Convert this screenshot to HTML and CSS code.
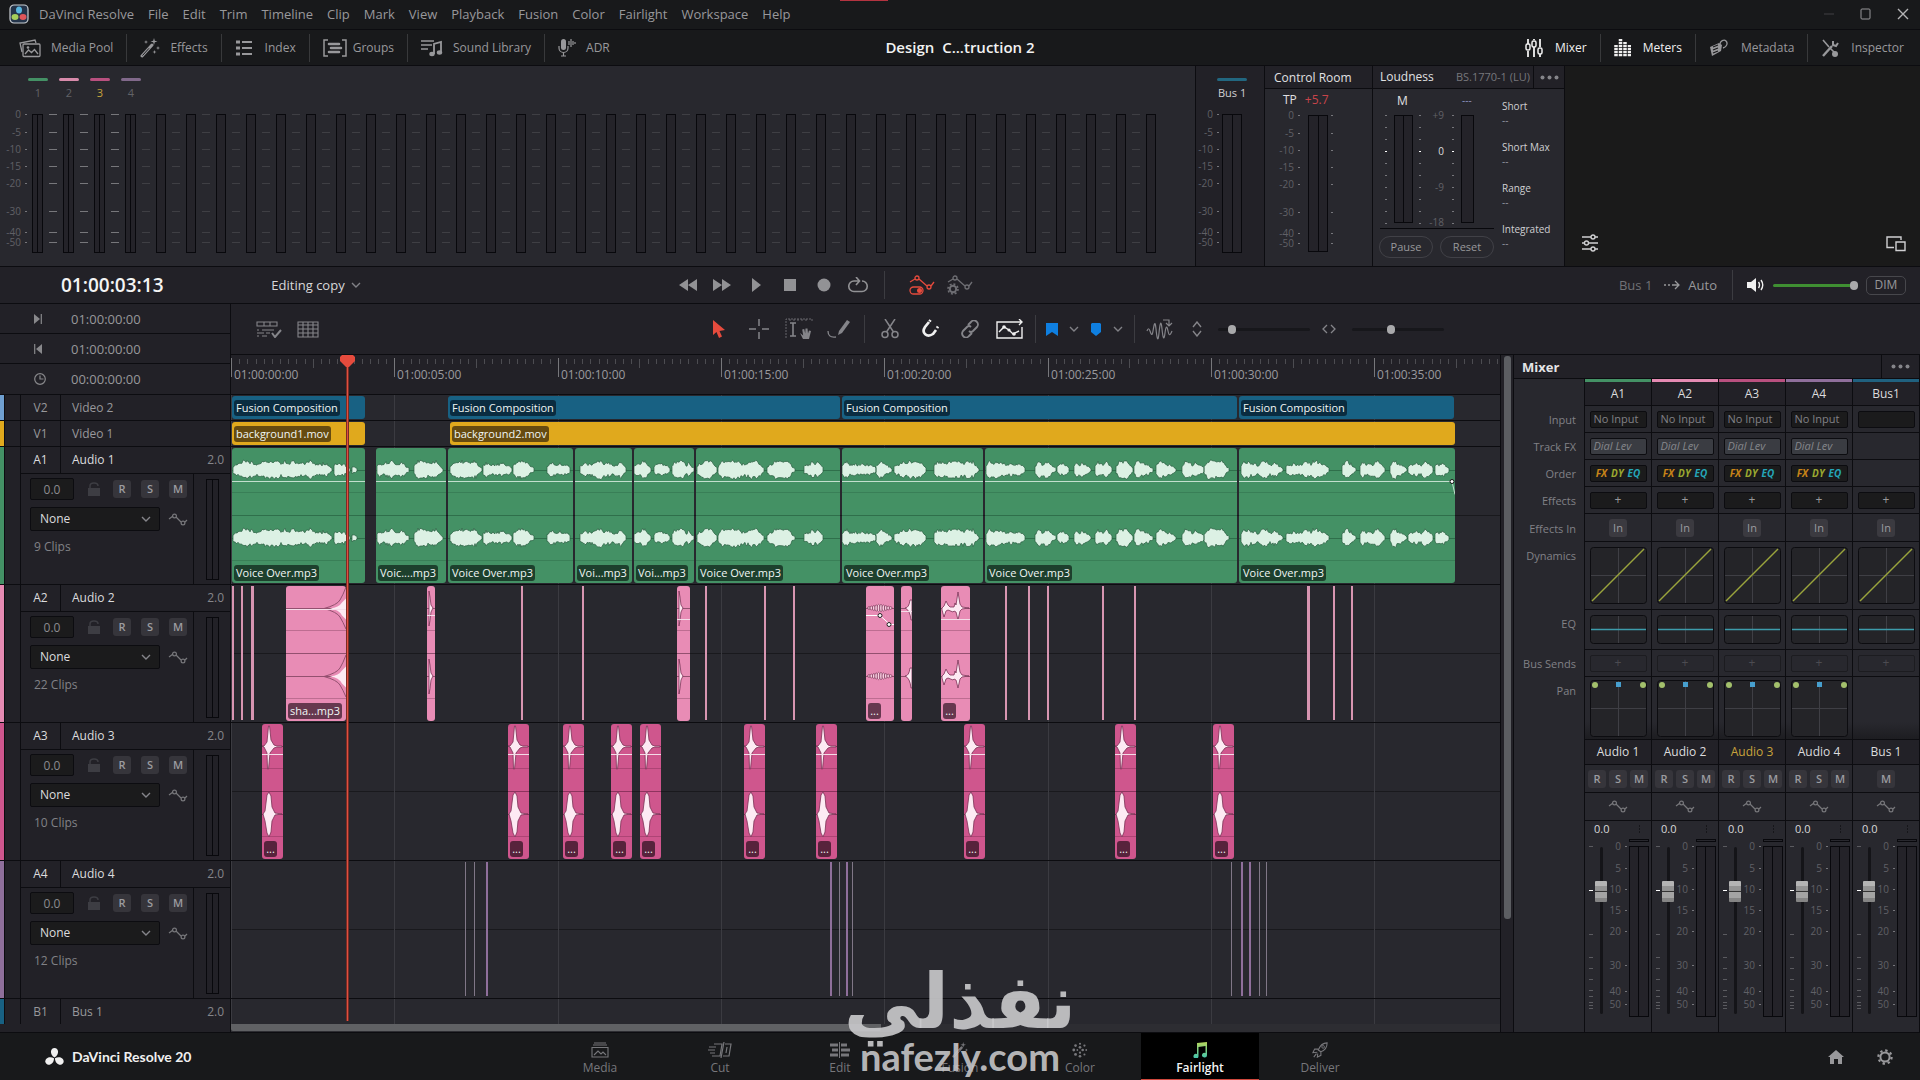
FILE: index.html
```html
<!DOCTYPE html>
<html lang="en">
<head>
<meta charset="utf-8">
<title>DaVinci Resolve - Fairlight</title>
<link rel="stylesheet" href="styles.css">
</head>
<body>
<svg class="defs" aria-hidden="true">
  <symbol id="i-pool" viewBox="0 0 22 20"><g fill="none" stroke="currentColor" stroke-width="1.3"><rect x="4" y="6" width="17" height="12.500" rx="1"/><path d="M3 14 1 5l15-3 1 3"/><path d="m6 16 3.500-4 3 2.500 3-3L19 16"/></g><circle cx="9" cy="9.500" r="1.300" fill="currentColor"/></symbol>
  <symbol id="i-fx" viewBox="0 0 20 20"><path d="M2 18 12 7" stroke="currentColor" stroke-width="3" stroke-linecap="round"/><path d="M2.500 17.500 9 10.300" stroke="#18191b" stroke-width="1"/><path d="m14 0 .8 2.700L17.500 3.500l-2.700.8L14 7l-.8-2.700-2.700-.8 2.700-.8zM18 8l.5 1.500L20 10l-1.500.5L18 12l-.5-1.500L16 10l1.500-.5zM6 2l.5 1.500L8 4l-1.500.5L6 6l-.5-1.500L4 4l1.500-.5zM14.500 12l.5 1.500 1.500.5-1.500.5-.5 1.500-.5-1.500-1.500-.5 1.500-.5z" fill="currentColor"/></symbol>
  <symbol id="i-index" viewBox="0 0 18 16"><path d="M0 2h4M0 8h4M0 14h4" stroke="currentColor" stroke-width="3.200"/><path d="M6 2h10M6 8h10M6 14h10" stroke="currentColor" stroke-width="1.800"/></symbol>
  <symbol id="i-groups" viewBox="0 0 24 18"><path d="M5 1H1v16h4M19 1h4v16h-4" fill="none" stroke="currentColor" stroke-width="1.500"/><path d="M6 5h10M8 9h10M6 13h10" stroke="currentColor" stroke-width="2.600" stroke-linecap="round"/></symbol>
  <symbol id="i-sound" viewBox="0 0 22 18"><path d="M0 2h13M0 6h11M0 10h7" stroke="currentColor" stroke-width="1.500"/><path d="M13 15V5l7-2v10" fill="none" stroke="currentColor" stroke-width="1.800"/><ellipse cx="11" cy="15" rx="2.700" ry="2.200" fill="currentColor"/><ellipse cx="18.500" cy="13.500" rx="2.700" ry="2.200" fill="currentColor"/></symbol>
  <symbol id="i-adr" viewBox="0 0 18 20"><rect x="3" y="1" width="5" height="11" rx="2.500" fill="currentColor"/><path d="M1 8v2a4.500 4.500 0 0 0 9 0V8M5.500 15v3M3 18h5M11 3v4M13 1v8M15 3v4M17 4v2" fill="none" stroke="currentColor" stroke-width="1.200"/></symbol>
  <symbol id="i-mixer" viewBox="0 0 18 18"><path d="M3 0v5M3 12v6M9 0v1M9 8v10M15 0v8M15 15v3" stroke="currentColor" stroke-width="1.800"/><g fill="none" stroke="currentColor" stroke-width="1.500"><rect x="1" y="5" width="4" height="6" rx="1.500"/><rect x="7" y="2" width="4" height="6" rx="1.500"/><rect x="13" y="9" width="4" height="6" rx="1.500"/></g></symbol>
  <symbol id="i-meters" viewBox="0 0 17 18"><path d="M2 6v12M6.500 0v18M11 3v15M15.500 6v12" stroke="currentColor" stroke-width="3.500" stroke-dasharray="2.200 .8"/></symbol>
  <symbol id="i-meta" viewBox="0 0 20 18"><path d="m1 8 9-4 3 2-1 6-9 5z" fill="currentColor"/><path d="m4 8 5-2M4 11l5-2M4 14l5-2" stroke="#18191b" stroke-width="1.200"/><path d="M11 5c0-3 4-5 6-3s1 6-3 7" fill="none" stroke="currentColor" stroke-width="1.300"/></symbol>
  <symbol id="i-inspect" viewBox="0 0 18 18"><path d="m2 1 6 7M9 9l6 6" stroke="currentColor" stroke-width="1.600"/><circle cx="14" cy="15" r="3" fill="currentColor"/><path d="m2 17 9-10" stroke="currentColor" stroke-width="2.400"/><path d="M12 2v4l3 1 2-3" fill="none" stroke="currentColor" stroke-width="2"/></symbol>
  <symbol id="i-sliders" viewBox="0 0 18 18"><g fill="none" stroke="currentColor" stroke-width="1.400"><path d="M1 3h9M14 3h3M1 9h2M8 9h9M1 15h9M14 15h3"/><circle cx="12" cy="3" r="2"/><circle cx="5.500" cy="9" r="2"/><circle cx="12" cy="15" r="2"/></g></symbol>
  <symbol id="i-pip" viewBox="0 0 20 16"><path d="M8 11.500H1V1h14v3M10 6h9v8.500h-9z" fill="none" stroke="currentColor" stroke-width="1.400"/></symbol>
  <symbol id="i-chev" viewBox="0 0 10 6"><path d="m1 1 4 4 4-4" fill="none" stroke="currentColor" stroke-width="1.400"/></symbol>
  <symbol id="i-rew" viewBox="0 0 20 14"><path d="M10 1v12L1 7zM19 1v12l-9-6z" fill="currentColor"/></symbol>
  <symbol id="i-ff" viewBox="0 0 20 14"><path d="M1 1v12l9-6zM10 1v12l9-6z" fill="currentColor"/></symbol>
  <symbol id="i-play" viewBox="0 0 20 14"><path d="M6 0v14l9-7z" fill="currentColor"/></symbol>
  <symbol id="i-stop" viewBox="0 0 20 14"><path d="M4 1h12v12H4z" fill="currentColor"/></symbol>
  <symbol id="i-rec" viewBox="0 0 20 14"><circle cx="10" cy="7" r="6.500" fill="currentColor"/></symbol>
  <symbol id="i-loop" viewBox="0 0 22 16"><path d="M7 4a5.200 5.200 0 0 0 0 10.500h8A5.200 5.200 0 0 0 15 4h-5M13 0l-3.500 4 3.500 4" fill="none" stroke="currentColor" stroke-width="1.600" transform="matrix(-1 0 0 1 22 0)"/></symbol>
  <symbol id="i-autosw" viewBox="0 0 26 20"><g fill="none" stroke="currentColor" stroke-width="1.300"><path d="m1 7 5-3M10 4l8 7M22 11l3-4"/><circle cx="8" cy="3" r="2"/><circle cx="20" cy="12" r="2"/><rect x="1" y="12" width="13" height="7" rx="3.500"/></g><circle cx="10.500" cy="15.500" r="2.500" fill="currentColor"/></symbol>
  <symbol id="i-autoset" viewBox="0 0 26 20"><g fill="none" stroke="currentColor" stroke-width="1.300"><path d="m1 7 5-3M10 4l8 7M22 11l3-4"/><circle cx="8" cy="3" r="2"/><circle cx="20" cy="12" r="2"/><circle cx="6" cy="14" r="3.200" stroke-width="2"/><circle cx="6" cy="14" r="5" stroke-width="1.600" stroke-dasharray="2 1.900"/></g></symbol>
  <symbol id="i-curve" viewBox="0 0 20 13"><g fill="none" stroke="currentColor" stroke-width="1.200"><path d="m1 6 4-3M8 4l5 5M17 9l2-2"/><circle cx="6.500" cy="3" r="1.900"/><circle cx="15" cy="10" r="1.900"/></g></symbol>
  <symbol id="i-spk" viewBox="0 0 18 14"><path d="M0 4h4l5-4v14L4 10H0z" fill="currentColor"/><path d="M11.500 4q2 3 0 6M14 2q3.500 5 0 10" fill="none" stroke="currentColor" stroke-width="1.400"/></symbol>
  <symbol id="i-arrow" viewBox="0 0 16 10"><path d="M0 5h2M4 5h2M8 5h7M11 1l4 4-4 4" fill="none" stroke="currentColor" stroke-width="1.300"/></symbol>
  <symbol id="i-in" viewBox="0 0 8 10"><path d="M0 0v10l6-5z" fill="currentColor"/><path d="M7.300 0v10" stroke="currentColor" stroke-width="1.200"/></symbol>
  <symbol id="i-clock" viewBox="0 0 12 12"><g fill="none" stroke="currentColor" stroke-width="1.200"><circle cx="6" cy="6" r="5.300"/><path d="M6 2.500V6h3.500"/></g></symbol>
  <symbol id="i-opts" viewBox="0 0 26 17"><path d="M1 1h20v4H1zM8 1v4M14 1v4M1 9h2M6 9h12M1 12h7M10 12h4M1 15h2M6 15h5" fill="none" stroke="currentColor" stroke-width="1.100"/><path d="m16 12 3 4 6-7" fill="none" stroke="currentColor" stroke-width="2"/></symbol>
  <symbol id="i-grid" viewBox="0 0 22 17"><path d="M1 1h20v15H1zM1 4h20M1 8h20M1 12h20M6 1v15M11 1v15M16 1v15" fill="none" stroke="currentColor" stroke-width="1.100"/></symbol>
  <symbol id="i-cursor" viewBox="0 0 12 18"><path d="M0 0v15l3.500-3 2.500 6 3-1.500-2.500-5.500L12 10z" fill="currentColor"/></symbol>
  <symbol id="i-cross" viewBox="0 0 20 20"><path d="M10 0v7M10 13v7M0 10h7M13 10h7" stroke="currentColor" stroke-width="1.500"/></symbol>
  <symbol id="i-ibeam" viewBox="0 0 28 22"><path d="M1 20V1h26v3M5 1v3M9 1v3M13 1v3M17 1v3M21 1v3" fill="none" stroke="currentColor" stroke-width=".7" stroke-dasharray="2 1"/><path d="M5 5h6M8 5v13M5 18h6" stroke="currentColor" stroke-width="1.600"/><path d="m15 15 3 6h6l2-8-2-.5-1 3-.5-5h-2l-.3 5-1-4.500-2 .5 1 6z" fill="currentColor"/></symbol>
  <symbol id="i-pencil" viewBox="0 0 24 20"><path d="m12 12 8-11 3 2-8 11-4 2z" fill="currentColor"/><path d="M1 12c0 4 2 7 8 6" fill="none" stroke="currentColor" stroke-width="1.300"/></symbol>
  <symbol id="i-cut" viewBox="0 0 18 20"><g fill="none" stroke="currentColor" stroke-width="1.500"><path d="m4 0 8.500 13M14 0 5.500 13"/><circle cx="4" cy="15.500" r="3"/><circle cx="14" cy="15.500" r="3"/></g></symbol>
  <symbol id="i-magnet" viewBox="0 0 20 20"><path d="M9 3 5 8c-4 6 2 11 8 7l3-4" fill="none" stroke="currentColor" stroke-width="2.700"/><path d="m10.500 1-1 1.500M18 7.500 17 9" stroke="currentColor" stroke-width="2.700"/></symbol>
  <symbol id="i-link" viewBox="0 0 18 18"><g fill="none" stroke="currentColor" stroke-width="1.900"><path d="m7 5 3-3a3.700 3.700 0 0 1 6 5l-4 4a3 3 0 0 1-4 0"/><path d="m11 13-3 3a3.700 3.700 0 0 1-6-5l4-4a3 3 0 0 1 4 0"/></g></symbol>
  <symbol id="i-wavebox" viewBox="0 0 28 20"><path d="M18 3H1v16h25V8M18 3h8M23 0l3 3-3 3" fill="none" stroke="currentColor" stroke-width="1.400"/><path d="m3 13 5-5 5 3 4 4 6-3" fill="none" stroke="currentColor" stroke-width="1.400"/><circle cx="8" cy="8" r="1.800" fill="currentColor"/><circle cx="13" cy="11" r="1.600" fill="currentColor"/><circle cx="18" cy="15" r="1.800" fill="currentColor"/></symbol>
  <symbol id="i-bm" viewBox="0 0 12 13"><path d="M0 0h12v13l-6-4-6 4z" fill="currentColor"/></symbol>
  <symbol id="i-shield" viewBox="0 0 10 13"><path d="M1 0h8l1 1v8l-5 4-5-4V1z" fill="currentColor"/></symbol>
  <symbol id="i-wave" viewBox="0 0 28 22"><path d="M1 13c1-3 2-3 3 0s2 6 3 0 2-12 3-2 2 14 3 4 2-14 3-4 2 12 3 4 2-7 3-2 2 5 4 0M17 2h6v5M20 5l3 3 3-3" fill="none" stroke="currentColor" stroke-width="1.200"/></symbol>
  <symbol id="i-updown" viewBox="0 0 10 16"><path d="m1 6 4-5 4 5M1 10l4 5 4-5" fill="none" stroke="currentColor" stroke-width="1.400"/></symbol>
  <symbol id="i-lr" viewBox="0 0 14 10"><path d="M5 1 1 5l4 4M9 1l4 4-4 4" fill="none" stroke="currentColor" stroke-width="1.300"/></symbol>
  <symbol id="i-lock" viewBox="0 0 14 14"><path d="M1 6h12v8H1z" fill="currentColor"/><path d="M3 6V4q0-3 4-3t4 3" fill="none" stroke="currentColor" stroke-width="1.500"/></symbol>
  <symbol id="i-media" viewBox="0 0 18 16"><path d="M3 1h12M2 3h14M1 5.500h16V15H1zM3 13l4-4 3 3 2-2 3 3" fill="none" stroke="currentColor" stroke-width="1.100"/></symbol>
  <symbol id="i-cutpg" viewBox="0 0 24 16"><path d="M6 2h8l-2 12H4M17 2h6l-2 12h-6M1 5h7M0 8h7M2 11h5M16 0l-3 16M19 5l-1 6" fill="none" stroke="currentColor" stroke-width="1.200"/></symbol>
  <symbol id="i-edit" viewBox="0 0 22 16"><path d="M1 3h8M3 8h6M1 13h8M12 3h6M12 8h9M12 13h8" stroke="currentColor" stroke-width="2.800"/><path d="M10.500 0v16" stroke="currentColor" stroke-width="1"/></symbol>
  <symbol id="i-color" viewBox="0 0 18 18"><g fill="currentColor"><circle cx="9" cy="2" r="1.200"/><circle cx="9" cy="6" r="1.500"/><circle cx="14" cy="4" r="1.300"/><circle cx="4" cy="4" r="1.500"/><circle cx="2" cy="9" r="1.600"/><circle cx="6" cy="9" r="1"/><circle cx="12" cy="9" r="1.500"/><circle cx="16" cy="9" r="1"/><circle cx="4" cy="14" r="1.600"/><circle cx="9" cy="12" r="1.300"/><circle cx="9" cy="16" r="1.500"/><circle cx="14" cy="14" r="1.200"/></g></symbol>
  <symbol id="i-note" viewBox="0 0 14 16"><defs><linearGradient id="ng" x1="0" y1="0" x2="0" y2="1"><stop offset="0" stop-color="#b5d65c"/><stop offset="1" stop-color="#41c5ae"/></linearGradient></defs><path d="M4 0v1l10-1v13a2.500 2.300 0 1 1-1.500-2V4L5.500 5v9A2.500 2.300 0 1 1 4 12z" fill="url(#ng)"/></symbol>
  <symbol id="i-rocket" viewBox="0 0 18 18"><path d="M17 1c-5 0-8 3-10 8l3 2c5-2 7-5 7-10zM7 8H3l-2 4 5-.5M10 11v4l-4 2 .5-4M2 17l3-4" fill="none" stroke="currentColor" stroke-width="1.200"/><circle cx="12.500" cy="5.500" r="1.500" fill="none" stroke="currentColor"/></symbol>
  <symbol id="i-home" viewBox="0 0 16 14"><path d="m8 0 8 7h-2v7h-4V9H6v5H2V7H0z" fill="currentColor"/></symbol>
  <symbol id="i-gear" viewBox="0 0 16 16"><circle cx="8" cy="8" r="4.600" fill="none" stroke="currentColor" stroke-width="2"/><circle cx="8" cy="8" r="6.600" fill="none" stroke="currentColor" stroke-width="2.200" stroke-dasharray="2.400 2.780"/></symbol>
  <symbol id="i-logo" viewBox="0 0 18 18"><g fill="currentColor"><path d="M9 9C4 6 5 0 9 0s5 6 0 9z"/><path d="M9 9C4 6 5 0 9 0s5 6 0 9z" transform="rotate(120 9 9.500)"/><path d="M9 9C4 6 5 0 9 0s5 6 0 9z" transform="rotate(240 9 9.500)"/></g></symbol>
</svg>

<header class="menubar">
  <svg class="app-icon" viewBox="0 0 20 20"><rect x="1" y="1" width="18" height="18" rx="4" fill="#24344a" stroke="#c9cdd2" stroke-width="1.200"/><ellipse cx="10" cy="6" rx="3" ry="3.600" fill="#5bb7e0"/><ellipse cx="6" cy="13" rx="3.500" ry="3" fill="#a5cf5a"/><ellipse cx="14" cy="13" rx="3.500" ry="3" fill="#e0565a"/></svg>
  <nav class="menus" id="menus"></nav>
  <div class="win-controls">
    <button aria-label="Minimize" class="dim"><svg width="12" height="12"><path d="M1 6h10" stroke="currentColor"/></svg></button>
    <button aria-label="Maximize"><svg width="12" height="12"><rect x="1" y="1" width="9" height="10" rx="1" fill="none" stroke="currentColor"/></svg></button>
    <button aria-label="Close" class="bright"><svg width="12" height="12"><path d="m1 1 10 10M11 1 1 11" stroke="currentColor" stroke-width="1.400"/></svg></button>
  </div>
  <i class="notch"></i>
</header>

<div class="uibar">
  <div class="uigroup">
    <button><svg width="22" height="20"><use href="#i-pool"/></svg>Media Pool</button>
    <button><svg width="20" height="20"><use href="#i-fx"/></svg>Effects</button>
    <button><svg width="20" height="16"><use href="#i-index"/></svg>Index</button>
    <button class="tight"><svg width="24" height="18"><use href="#i-groups"/></svg>Groups</button>
    <button><svg width="22" height="18"><use href="#i-sound"/></svg>Sound Library</button>
    <button><svg width="18" height="20"><use href="#i-adr"/></svg>ADR</button>
  </div>
  <h1>Design&nbsp; C...truction 2</h1>
  <div class="uigroup right">
    <button class="on"><svg width="18" height="18"><use href="#i-mixer"/></svg>Mixer</button>
    <button class="on"><svg width="17" height="18"><use href="#i-meters"/></svg>Meters</button>
    <button><svg width="20" height="18"><use href="#i-meta"/></svg>Metadata</button>
    <button><svg width="18" height="18"><use href="#i-inspect"/></svg>Inspector</button>
  </div>
</div>

<section class="monitor">
  <div class="track-meters" id="trackMeters"></div>
  <div class="bus-meter">
    <i class="pill"></i><span>Bus 1</span>
    <div class="mrow"><svg class="scale" width="24" height="145" data-scale="db"></svg><i class="meter wide"></i></div>
  </div>
  <div class="control-room">
    <h2>Control Room</h2>
    <p><b>TP</b><em>+5.7</em></p>
    <div class="mrow"><svg class="scale" width="36" height="145" data-scale="db"></svg><i class="meter wide"></i><svg class="scale" width="10" height="145" data-scale="ticks"></svg></div>
  </div>
  <div class="loudness">
    <div class="lhead"><h2>Loudness</h2><span>BS.1770-1 (LU)</span><button aria-label="Loudness options"><svg width="19" height="5"><use href="#i-dots"/></svg></button></div>
    <div class="lbody">
      <div class="lleft">
        <svg class="lscale" width="116" height="137" id="lufs"></svg>
        <div class="lbtns"><button>Pause</button><button>Reset</button></div>
      </div>
      <dl><dt>Short</dt><dd>--</dd><dt>Short Max</dt><dd>--</dd><dt>Range</dt><dd>--</dd><dt>Integrated</dt><dd>--</dd></dl>
    </div>
  </div>
  <div class="viewer">
    <button aria-label="Viewer settings"><svg width="18" height="18"><use href="#i-sliders"/></svg></button>
    <button aria-label="Float viewer"><svg width="20" height="16"><use href="#i-pip"/></svg></button>
  </div>
</section>

<section class="transport">
  <time>01:00:03:13</time>
  <button class="timeline-name">Editing copy <svg width="10" height="6"><use href="#i-chev"/></svg></button>
  <div class="keys">
    <button aria-label="Rewind"><svg width="20" height="14"><use href="#i-rew"/></svg></button>
    <button aria-label="Fast forward"><svg width="20" height="14"><use href="#i-ff"/></svg></button>
    <button aria-label="Play"><svg width="20" height="14"><use href="#i-play"/></svg></button>
    <button aria-label="Stop"><svg width="20" height="14"><use href="#i-stop"/></svg></button>
    <button aria-label="Record"><svg width="20" height="14"><use href="#i-rec"/></svg></button>
    <button aria-label="Loop"><svg width="22" height="16"><use href="#i-loop"/></svg></button>
    <i class="sep"></i>
    <button aria-label="Automation" class="red"><svg width="26" height="20"><use href="#i-autosw"/></svg></button>
    <button aria-label="Automation settings"><svg width="26" height="20"><use href="#i-autoset"/></svg></button>
  </div>
  <div class="monitoring">
    <span class="dim">Bus 1</span><svg width="16" height="10"><use href="#i-arrow"/></svg><span>Auto</span>
    <i class="sep"></i>
    <button aria-label="Mute" class="white"><svg width="18" height="14"><use href="#i-spk"/></svg></button>
    <input type="range" class="volume" aria-label="Monitor volume" value="100">
    <button class="dimbtn">DIM</button>
  </div>
</section>

<main class="work">
  <div class="times">
    <div><svg width="8" height="10"><use href="#i-in"/></svg><span>01:00:00:00</span></div>
    <div><svg width="8" height="10" class="flip"><use href="#i-in"/></svg><span>01:00:00:00</span></div>
    <div><svg width="12" height="12"><use href="#i-clock"/></svg><span>00:00:00:00</span></div>
  </div>
  <div class="tools">
    <div class="tleft">
      <button aria-label="Timeline options"><svg width="26" height="17"><use href="#i-opts"/></svg></button>
      <button aria-label="Grid"><svg width="22" height="17"><use href="#i-grid"/></svg></button>
    </div>
    <div class="tmid">
      <button aria-label="Pointer" class="red"><svg width="12" height="18"><use href="#i-cursor"/></svg></button>
      <button aria-label="Range"><svg width="20" height="20"><use href="#i-cross"/></svg></button>
      <button aria-label="Edit selection"><svg width="28" height="22"><use href="#i-ibeam"/></svg></button>
      <button aria-label="Pencil"><svg width="24" height="20"><use href="#i-pencil"/></svg></button>
      <i class="sep"></i>
      <button aria-label="Razor"><svg width="18" height="20"><use href="#i-cut"/></svg></button>
      <button aria-label="Snapping" class="white"><svg width="20" height="20"><use href="#i-magnet"/></svg></button>
      <button aria-label="Link"><svg width="18" height="18"><use href="#i-link"/></svg></button>
      <button aria-label="Automation follows edit" class="white"><svg width="28" height="20"><use href="#i-wavebox"/></svg></button>
      <i class="sep"></i>
      <button aria-label="Flag" class="half blue"><svg width="12" height="13"><use href="#i-bm"/></svg></button>
      <button aria-label="Flag colour" class="half"><svg width="10" height="6"><use href="#i-chev"/></svg></button>
      <button aria-label="Marker" class="half blue"><svg width="10" height="13"><use href="#i-shield"/></svg></button>
      <button aria-label="Marker colour" class="half"><svg width="10" height="6"><use href="#i-chev"/></svg></button>
      <i class="sep"></i>
      <button aria-label="Transients"><svg width="28" height="22"><use href="#i-wave"/></svg></button>
      <label class="zoom"><svg width="10" height="16"><use href="#i-updown"/></svg><input type="range" aria-label="Vertical zoom" value="12"></label>
      <label class="zoom"><svg width="14" height="10"><use href="#i-lr"/></svg><input type="range" aria-label="Horizontal zoom" value="42"></label>
    </div>
  </div>
  <div class="ruler"><svg id="ruler" width="100%" height="39"></svg></div>
  <div class="tracks" id="tracks"></div>
  <div class="hfoot"></div>
  <div class="hscroll"><i></i></div>
  <div class="vscroll"><i></i></div>
  <aside class="mixer">
    <div class="mhead"><h2>Mixer</h2><button aria-label="Mixer options"><svg width="19" height="5"><use href="#i-dots"/></svg></button></div>
    <div class="mbody" id="mixer"></div>
  </aside>
  <div class="playhead"><svg width="15" height="13"><path d="M2 0h11l2 2v4l-7 7h-1L0 6V2z" fill="#e64b3d"/></svg></div>
</main>

<footer class="pages">
  <div class="brand"><svg width="19" height="19"><use href="#i-logo"/></svg>DaVinci Resolve 20</div>
  <nav>
    <a href="#media"><svg width="18" height="16"><use href="#i-media"/></svg>Media</a>
    <a href="#cut"><svg width="24" height="16"><use href="#i-cutpg"/></svg>Cut</a>
    <a href="#edit"><svg width="22" height="16"><use href="#i-edit"/></svg>Edit</a>
    <a href="#fusion"><svg width="18" height="16"><use href="#i-fx"/></svg>Fusion</a>
    <a href="#color"><svg width="18" height="16"><use href="#i-color"/></svg>Color</a>
    <a href="#fairlight" class="active" aria-current="page"><svg width="16" height="16"><use href="#i-note"/></svg>Fairlight</a>
    <a href="#deliver"><svg width="18" height="16"><use href="#i-rocket"/></svg>Deliver</a>
  </nav>
  <div class="sys">
    <button aria-label="Project manager"><svg width="16" height="14"><use href="#i-home"/></svg></button>
    <button aria-label="Project settings"><svg width="16" height="16"><use href="#i-gear"/></svg></button>
  </div>
</footer>
<div class="watermark"><span lang="ar" dir="rtl">نفذلي</span><span>nafezly.com</span></div>
<svg class="defs" aria-hidden="true"><symbol id="i-dots" viewBox="0 0 19 5"><circle cx="2.500" cy="2.500" r="2" fill="currentColor"/><circle cx="9.500" cy="2.500" r="2" fill="currentColor"/><circle cx="16.500" cy="2.500" r="2" fill="currentColor"/></symbol></svg>
<script src="script.js"></script>
</body>
</html>
```
FILE: styles.css
```css
* { box-sizing: border-box; }
:root { --line: #0c0c10; --panel: #28282e; --dark: #222127; --bar: #18191b; --text: #98989b; --dim: #626267; }
body { margin: 0; min-height: 100vh; display: flex; flex-direction: column; background: var(--dark); color: var(--text); font: 12px/16px "Open Sans", "Noto Sans", sans-serif; position: relative; overflow: hidden; }
h1, h2, p, dl, dd { margin: 0; }
button { background: none; border: 0; padding: 0; color: inherit; font: inherit; display: inline-flex; align-items: center; justify-content: center; }
svg { display: block; flex: none; }
a { color: inherit; text-decoration: none; }
.defs { position: absolute; width: 0; height: 0; }
.sep { width: 1px; height: 28px; background: #3c3c41; flex: none; }
.red { color: #e64b3d; }
.white { color: #f0f0f0; }
.blue { color: #0f7fe0; }
.dim { color: #717176; }

.menubar { display: flex; align-items: center; height: 30px; background: var(--bar); border-bottom: 1px solid var(--line); padding: 0 11px 1px 9px; position: relative; }
.app-icon { width: 20px; height: 20px; }
.menus { display: flex; gap: 14px; margin-left: 10px; flex: 1; font-size: 13px; }
.win-controls { display: flex; gap: 25px; }
.win-controls .dim { color: #414144; }
.win-controls .bright { color: #b4b4b6; }
.notch { position: absolute; top: 0; left: 840px; width: 48px; height: 1px; background: #b33340; }

.uibar { display: grid; grid-template-columns: 1fr auto 1fr; align-items: center; height: 36px; background: var(--bar); border-bottom: 1px solid var(--line); }
.uibar h1 { color: #f2f2f2; font-size: 15px; line-height: 20px; font-weight: 600; padding-bottom: 2px; }
.uigroup { display: flex; padding-left: 6px; }
.uigroup.right { justify-content: flex-end; padding: 0 3px 0 0; }
.uigroup button { height: 28px; padding: 0 13px; gap: 10px; border-right: 1px solid #38393b; }
.uigroup.right button { gap: 12px; }
.uigroup button.tight { gap: 6px; }
.uigroup button:last-child { border-right: 0; }
.uigroup .on { color: #f0f0f0; }

.monitor { display: flex; height: 201px; border-bottom: 1px solid var(--line); }
.monitor h2 { font-size: 12px; font-weight: 400; color: #e0e0e2; }
.track-meters { flex: 1; display: flex; background: var(--panel); padding-top: 12px; overflow: hidden; }
.track-meters > .scale { margin-top: 30px; }
.strip { width: 30px; flex: none; text-align: left; }
.strip.st { width: 31px; }
.pill { display: block; height: 3px; border-radius: 2px; width: 20px; background: transparent; }
.strip span { display: block; height: 33px; padding-top: 4px; width: 20px; text-align: center; color: var(--dim); font-size: 11px; }
.strip .sel { color: #c9a43c; }
.strip .mrow { padding-left: 4px; display: flex; gap: 6px; }
.mrow { display: flex; }
.meter { display: block; width: 10px; height: 139px; border: 1px solid #08080c; background: #242329; flex: none; }
.st .meter { width: 11px; background: linear-gradient(90deg, transparent 4px, #08080c 4px, #08080c 5px, transparent 5px), #242329; }
.meter.wide { width: 20px; background: linear-gradient(90deg, transparent 9px, #08080c 9px, #08080c 10px, transparent 10px), #242329; }
.scale { margin-top: -6px; }
svg text { font-family: "Open Sans", "Noto Sans", sans-serif; font-size: 10px; fill: #606066; }
.bus-meter { width: 69px; border-left: 1px solid var(--line); padding-top: 12px; }
.bus-meter .pill { width: 30px; margin-left: 21px; background: #226780; }
.bus-meter span { display: block; margin-left: 22px; height: 33px; padding-top: 4px; font-size: 11px; color: #d0d0d2; }
.bus-meter .meter { margin-left: 2px; }
.control-room { width: 108px; border-left: 1px solid var(--line); background: var(--panel); }
.control-room h2 { height: 23px; background: var(--dark); border-bottom: 1px solid var(--line); padding: 4px 0 0 9px; }
.control-room p { padding: 3px 0 0 18px; display: flex; gap: 8px; height: 26px; color: #e0e0e2; }
.control-room b { font-weight: 400; }
.control-room em { font-style: normal; color: #c8444a; }
.control-room .meter { margin-left: 7px; height: 137px; }
.loudness { width: 193px; border: solid var(--line); border-width: 0 1px; background: var(--panel); }
.lhead { display: flex; height: 23px; background: var(--dark); border-bottom: 1px solid var(--line); }
.lhead h2 { padding: 3px 0 0 7px; flex: 1; }
.lhead span { font-size: 11px; color: #77777c; padding: 3px 3px 0 0; }
.lhead button, .mhead button { border-left: 1px solid var(--line); color: #85858a; }
.lhead button { width: 31px; }
.lbody { display: flex; }
.lleft { width: 122px; padding: 3px 0 0 6px; }
.lbtns { display: flex; gap: 7px; padding-top: 7px; }
.lbtns button { width: 54px; height: 22px; border: 1px solid #414147; border-radius: 11px; font-size: 11px; }
.loudness dl { padding: 10px 0 0 7px; font-size: 10px; line-height: 14px; color: #cfcfd2; }
.loudness dd { height: 27px; color: #93949f; }
.viewer { width: 355px; background: #1a1a1a; display: flex; align-items: flex-end; justify-content: space-between; padding: 0 14px 14px 16px; color: #d0d0d2; }

.transport { display: flex; align-items: center; height: 37px; border-bottom: 1px solid var(--line); }
.transport time { width: 231px; padding-left: 61px; font-size: 19px; line-height: 24px; font-weight: 600; color: #f4f4f4; flex: none; }
.timeline-name { margin-left: 40px; font-size: 13px; gap: 6px; color: #d8d8da; width: 90px; white-space: nowrap; flex: none; }
.timeline-name svg, .half svg[height="6"] { color: #818186; }
.keys { display: flex; align-items: center; margin-left: 310px; }
.keys button { width: 34px; color: #929295; }
.keys .sep { margin: 0 18px 0 9px; }
.keys .sep ~ button { width: 38px; color: #6e6e73; }
.keys .sep ~ .red { color: #e64b3d; }
.monitoring { margin-left: auto; display: flex; align-items: center; gap: 8px; padding-right: 14px; font-size: 13px; }
.monitoring .dim { margin-right: 4px; }
.monitoring .sep { margin: 0 6px 0 7px; height: 30px; }
input[type=range] { appearance: none; margin: 0; background: none; }
input[type=range]::-webkit-slider-thumb { appearance: none; width: 8px; height: 9px; border-radius: 5px; background: #a9a9ab; margin-top: -3px; }
input[type=range]::-webkit-slider-runnable-track { height: 3px; background: #17171b; border-radius: 2px; }
.volume { width: 85px; margin-left: 2px; }
.volume::-webkit-slider-runnable-track { background: #3f8f32 !important; }
.dimbtn { width: 40px; height: 19px; border: 1px solid #47474c; border-radius: 5px; font-size: 12px; }

.work { flex: 1; display: grid; position: relative; grid-template-columns: 231px minmax(0, 1fr) 13px 407px; grid-template-rows: 51px 40px auto 1fr; grid-template-areas: "times tools tools tools" "times ruler vs mixer" "tracks tracks vs mixer" "foot hs vs mixer"; }
.times { grid-area: times; border-right: 1px solid var(--line); border-bottom: 1px solid var(--line); }
.times div { height: 30px; border-bottom: 1px solid var(--line); display: grid; grid-template-columns: 36px 1fr; align-items: center; padding-left: 35px; font-size: 13px; }
.times div:last-child { border-bottom: 0; }
.times svg { color: #88888b; margin-left: -1px; }
.times .flip { transform: scaleX(-1); }
.tools { grid-area: tools; border-bottom: 1px solid var(--line); display: grid; grid-template-columns: 1fr auto 1fr; align-items: center; color: #85858a; }
.tleft { display: flex; gap: 15px; padding-left: 25px; }
.tmid { display: flex; align-items: center; padding-right: 8px; }
.tmid button { width: 40px; height: 30px; }
.tmid .half { width: 22px; }
.tmid .sep { margin: 0 5px; }
.zoom { display: flex; align-items: center; gap: 16px; margin-left: 12px; }
.zoom input { width: 92px; }
.ruler { grid-area: ruler; background: var(--dark); border-bottom: 1px solid var(--line); overflow: hidden; }
.ruler text { font-size: 12px; fill: #9a9a9e; }
.tracks { grid-area: tracks; position: relative; }
.track { display: grid; grid-template-columns: 4px 17px 210px minmax(0, 1fr); border-bottom: 1px solid var(--line); height: 26px; }
.track.audio { height: 138px; }
.track.bus { height: 23px; border-bottom: 0; }
.gutter { border-right: 1px solid var(--line); border-left: 1px solid var(--line); }
.thead { border-right: 1px solid var(--line); }
.tname { display: grid; grid-template-columns: 40px 1fr auto; height: 25px; align-items: center; padding-right: 6px; }
.audio .tname { color: #dcdcde; border-bottom: 1px solid var(--line); height: 27px; }
.tname b { font-weight: 400; align-self: stretch; border-right: 1px solid var(--line); display: grid; place-items: center; }
.tname span { padding-left: 11px; }
.tname i { font-style: normal; color: #85858a; }
.tbody { display: grid; grid-template-columns: 173px 36px; height: 110px; }
.tctl { border-right: 1px solid var(--line); padding: 4px 4px 0 9px; }
.trow { display: flex; align-items: center; height: 22px; gap: 10px; }
.tctl input { width: 44px; height: 22px; background: #1b1b1c; border: 1px solid var(--line); border-radius: 2px; color: #8b8b8f; text-align: center; font: inherit; padding: 0; margin-right: 3px; }
.trow svg { color: #3d3d43; }
.key { width: 18px; height: 18px; border-radius: 3px; background: #36353b; font-size: 11px; font-weight: 600; color: #9c9ca0; flex: none; }
.trow svg + .key { margin-left: 2px; }
.pick { position: relative; width: 130px; height: 24px; display: block; }
.pick select { appearance: none; width: 100%; height: 24px; background: #1b1b1c; border: 1px solid var(--line); border-radius: 2px; color: #dcdcde; font: inherit; padding: 0 9px; }
.pick svg { position: absolute; right: 9px; top: 9px; color: #85858a; }
.trow.second { height: 24px; margin-top: 7px; gap: 8px; }
.trow.second > svg { color: #77777b; }
.tctl p { padding: 8px 4px; color: #818186; }
.tmeter { margin: 5px 0 0 12px; width: 13px; height: 101px; border: 1px solid #08080c; background: linear-gradient(90deg, transparent 5px, #08080c 5px, #08080c 6px, transparent 6px); }
.lane { position: relative; background: var(--panel); overflow: hidden; }
.audio .lane::before { content: ""; position: absolute; left: 0; right: 0; top: 68px; height: 1px; background: #19191d; }
.grid { position: absolute; top: 0; bottom: 0; width: 1px; background: #3b3b41; }
.clip { position: absolute; top: 1px; bottom: 1px; border-radius: 3px; overflow: hidden; }
.audio .clip { top: 1px; bottom: 1px; }
.clip svg { position: absolute; left: 0; top: 0; }
.clip span { position: absolute; left: 2px; bottom: 2px; padding: 0 2px; height: 16px; line-height: 15px; border-radius: 3px; font-size: 11px; font-weight: 500; color: #f0f6f4; white-space: nowrap; }
.track:not(.audio) .clip span { bottom: 3px; }
.thin { position: absolute; top: 1px; bottom: 2px; }
.blue-c { background: #186183; } .blue-c span { background: #0a2c40; }
.gold-c { background: #e0a91d; } .gold-c span { background: #664b10; }
.green-c { background: #449165; } .green-c span { background: #1d402d; }
.pink-c { background: #e88cb5; } .pink-c span { background: #66384f; }
.rose-c { background: #cf568d; } .rose-c span { background: #57233c; }
.clip .dots { width: 13px; text-align: center; padding: 0; }
.hfoot { grid-area: foot; border-right: 1px solid var(--line); border-bottom: 1px solid var(--line); }
.hscroll { grid-area: hs; background: #2d2d32; border-bottom: 1px solid var(--line); }
.hscroll i { display: block; width: 650px; height: 9px; border-radius: 2px; background: #606164; }
.vscroll { grid-area: vs; background: var(--dark); border-bottom: 1px solid var(--line); padding: 1px 2px 0 3px; border-left: 1px solid var(--line); }
.vscroll i { display: block; width: 7px; height: 563px; border-radius: 3px; background: #5c5e62; }
.playhead { position: absolute; left: 340px; top: 51px; bottom: 12px; width: 15px; }
.playhead::after { content: ""; position: absolute; left: 6px; top: 12px; bottom: 0; width: 3px; background: linear-gradient(90deg, #7a2c26 1px, #e0503f 1px, #e0503f 2px, #7a2c26 2px); }

.mixer { grid-area: mixer; border: solid var(--line); border-width: 0 1px 1px; background: var(--panel); display: flex; flex-direction: column; }
.mhead { display: flex; height: 24px; background: var(--dark); border-bottom: 1px solid var(--line); }
.mhead h2 { flex: 1; font-size: 13px; line-height: 24px; font-weight: 700; color: #e4e4e6; padding-left: 8px; }
.mhead button { width: 38px; }
.mbody { flex: 1; display: flex; }
.labels { width: 70px; font-size: 11px; text-align: right; color: #818186; }
.labels div { padding: 6px 8px 0 0; white-space: nowrap; }
.chan { width: 67px; border-left: 1px solid var(--line); display: flex; flex-direction: column; background: var(--panel); }
.cell { border-bottom: 1px solid var(--line); height: 27px; display: flex; justify-content: center; align-items: center; gap: 3px; flex: none; padding: 0 4px; }
.c-title { border-top: 3px solid; color: #dcdcde; background: var(--dark); }
.c-28 { height: 28px; } .c-dyn { height: 68px; } .c-eq { height: 40px; } .c-pan { height: 63px; background: linear-gradient(#28282e 45px, #1d1d21); }
.c-name { height: 25px; background: var(--dark); color: #dcdcde; }
.c-name.sel { color: #c9a43c; }
.slot { width: 57px; height: 17px; background: #1b1b1c; border: 1px solid var(--line); border-radius: 2px; flex: none; white-space: nowrap; overflow: hidden; }
.slot.no { color: #818186; font-size: 11px; justify-content: flex-start; padding-left: 3px; }
.slot.dial { background: #3a3c42; color: #85878b; font-size: 11px; font-style: italic; justify-content: flex-start; padding-left: 3px; }
.slot.ord { font-size: 10px; font-style: italic; font-weight: 700; gap: 4px; }
.slot.faint { background: none; border-color: #1c1c20; color: #4c4c51; }
.fx { color: #c88418; } .dy { color: #9aa830; } .eq { color: #25a6b8; }
.key.in { background: #3b3a40; font-weight: 400; }
.auto svg { color: #77777b; }
.fader { display: grid; grid-template-columns: 26px 1fr; position: relative; height: 211px; }
.fader > svg { grid-area: 1 / 1 / 2 / 3; }
.fader input { grid-area: 1 / 1; writing-mode: vertical-lr; direction: rtl; width: 12px; height: 167px; margin: 26px 0 0 10px; }
.fader input::-webkit-slider-runnable-track { width: 3px; height: 100%; background: #141418; }
.fader input::-webkit-slider-thumb { width: 12px; height: 21px; border-radius: 1px; margin: 0 0 0 -5px; background: linear-gradient(#b4b4b4 5px, #949494 5px, #949494 10px, #333 10px, #333 11px, #a4a4a4 11px, #a4a4a4 17px, #858585 17px); border: 0; }

.pages { display: grid; grid-template-columns: 1fr auto 1fr; height: 48px; background: var(--bar); }
.brand { display: flex; align-items: center; gap: 8px; padding-left: 45px; color: #f0f0f0; font: 700 14px/18px Lato, sans-serif; }
.pages nav { display: flex; gap: 2px; }
.pages a { width: 118px; display: flex; flex-direction: column; align-items: center; justify-content: flex-end; gap: 2px; padding-bottom: 4px; border-bottom: 2px solid transparent; color: #77777b; font-size: 12px; line-height: 15px; }
.pages a.active { background: #000; color: #f4f4f4; border-color: #d0483d; font-weight: 600; }
.sys { display: flex; justify-content: flex-end; align-items: center; gap: 33px; padding-right: 27px; color: #98989b; }
.watermark { position: absolute; left: 0; right: 0; bottom: 0; height: 118px; display: flex; flex-direction: column; align-items: center; pointer-events: none; color: rgba(202, 202, 204, .9); }
.watermark span:first-child { font: 700 76px/78px "DejaVu Sans", sans-serif; height: 73px; }
.watermark span:last-child { font: 700 38px/40px Lato, sans-serif; }
```
FILE: script.js
```js
const $ = s => document.querySelector(s);
const DB = [[0, 0], [-5, 18], [-10, 35], [-15, 52], [-20, 69], [-30, 97], [-40, 118], [-50, 128]];

// Menus
$('#menus').innerHTML = ['DaVinci Resolve', 'File', 'Edit', 'Trim', 'Timeline', 'Clip', 'Mark', 'View', 'Playback', 'Fusion', 'Color', 'Fairlight', 'Workspace', 'Help']
  .map(m => `<a href="#">${m}</a>`).join('');

// Meter scales
const scale = w => DB.map(([v, y]) => `<text x="${w - 7}" y="${y + 10}" text-anchor="end">${v}</text><path d="M${w - 3} ${y + 6}.5h2" stroke="#77777c"/>`).join('');
document.querySelectorAll('[data-scale=db]').forEach(s => s.innerHTML = scale(+s.getAttribute('width')));
document.querySelectorAll('[data-scale=ticks]').forEach(s => s.innerHTML = DB.map(([, y]) => `<path d="M3 ${y + 6}.5h2" stroke="#77777c"/>`).join(''));

// Track meters
const dashes = c => `<svg width="8" height="139">${DB.map(([, y]) => `<path d="M0 ${y}.5h8" stroke="${c}"/>`).join('')}</svg>`;
const pills = ['#449165', '#d88bab', '#b9507f', '#81698b'];
let strips = `<svg class="scale" width="28" height="145">${scale(28)}</svg>`;
for (let i = 0; i < 38; i++) {
  const st = i < 4;
  strips += `<div class="strip ${st ? 'st' : ''}"><i class="pill" ${st ? `style="background:${pills[i]}"` : ''}></i><span class="${i == 2 ? 'sel' : ''}">${st ? i + 1 : ''}</span><div class="mrow"><i class="meter"></i>${i < 37 ? dashes(i < 3 ? '#77777b' : '#3f3f44') : ''}</div></div>`;
}
$('#trackMeters').innerHTML = strips;

// Loudness meter
let l = '<text x="18" y="13" style="font-size:12px;fill:#e0e0e2">M</text><text x="83" y="12" style="fill:#8d93c0">---</text>';
for (let i = 0; i < 10; i++) {
  const y = 23 + i * 12, c = i == 3 ? '#fff' : '#77777c';
  for (const x of [6, 40, 73]) l += `<path d="M${x} ${y}.5h2" stroke="${c}"/>`;
}
l += '<rect x="15.500" y="23.500" width="18" height="107" fill="#242329" stroke="#08080c"/><path d="M24.500 23v108M1 136.500h114" stroke="#08080c"/><rect x="82.500" y="23.500" width="12" height="107" fill="#242329" stroke="#08080c"/>';
[['+9', 0], ['0', 36], ['-9', 72], ['-18', 107]].forEach(([t, y]) => l += `<text x="65" y="${y + 27}" text-anchor="end" ${t == '0' ? 'style="fill:#ddd"' : ''}>${t}</text>`);
$('#lufs').innerHTML = l;

// Ruler: five seconds take 163 and a third pixels
const at = s => Math.round(s * 49 / 1.5);
let r = '';
for (let i = 0; i < 156; i++) {
  const x = at(i / 4), major = i % 20 == 0, mid = i % 10 == 0;
  r += `<path d="M${x}.5 ${major ? 3 : 4}V${major ? 22 : mid ? 13 : 9}" stroke="${major ? '#77777b' : '#4c4c51'}"/>`;
  if (major) r += `<text x="${x + 3}" y="24">01:00:${String(i / 4).padStart(2, '0')}:00</text>`;
}
$('#ruler').innerHTML = r;

// Waveforms
let seed = 7;
const rnd = () => (seed = (seed * 16807) % 2147483647) / 2147483647;
function voice(x0, segs) {
  const paths = [22, 90].map(cy => {
    seed = x0 * 97 + 11;
    return segs.map(([a, b]) => {
      const top = [], bot = [], len = b - a, n = Math.max(3, len);
      let env = .75;
      for (let i = 0; i <= n; i++) {
        env = Math.min(1, Math.max(.5, env + (rnd() - .5) * .45));
        const t = i / n, edge = Math.min(1, .5 + t * len / 6, .25 + (1 - t) * len / 8);
        const x = (a - x0 + len * t).toFixed(1);
        top.push(`${x} ${(cy - (env * 7.5 + rnd() * 2.6) * edge).toFixed(1)}`);
        bot.unshift(`${x} ${(cy + (env * 7 + rnd() * 2.6) * edge).toFixed(1)}`);
      }
      return 'M' + top.concat(bot).join('L') + 'z';
    }).join('');
  }).join('');
  return `<path d="${paths}" fill="#dcf1e4" stroke="#2b5f42" stroke-width=".7"/>`;
}
const PINK = 'fill="#fdeaf3" stroke="#7b3156" stroke-width=".8"';
const SHAPES = {
  hit: `<path d="M0 22h2l3-4 1.500-16h1l1.500 14 3 5 3 1h5v1h-5l-3 1-4 5-1.500 16h-1L5 29l-3-6zM1 90l2-3 2-16 2-3 2 4 1 11 3 6 7 1-7 1-3 6-1 11-2 5-2-4-2-12z" ${PINK}/>`,
  swell: [22, 90].map(c => `<path d="M38 ${c}.5Q51 ${c - 3} 54 ${c - 8}T60 ${c - 21}M38 ${c}.5Q51 ${c + 4} 54 ${c + 9}T60 ${c + 21}" fill="none" stroke="#93506f"/><path d="M44 ${c}.5q9-1 12-6l4-4v21l-4-4q-3-6-12-7" fill="#fdeaf3"/>`).join(''),
  spike: `<path d="M2 5q1 5 2 14l2 3-2 4q-1 10-2 14zM2 73q1 5 2 14l2 3-2 4q-1 10-2 14z" ${PINK}/>`,
  tail: `<path d="M4 22q4 0 5-8h2v20h-1q-1-10-6-12zM4 90q4 0 5-8h2v20h-1q-1-10-6-12z" ${PINK}/>`,
  double: [22, 90].map(c => `<path d="M1 ${c}l2-2 2-5 2 4 2 2h4l1-4 1 2 2-13 2 12 2 3 7 1-7 1-2 2-2 9-2-8-2-1-1 1-5-2-2 1-2 6-2-7z" ${PINK}/>`).join(''),
  ripple: [22, 90].map(c => Array.from({ length: 10 }, (_, i) => `<ellipse cx="${3 + i * 2.4}" cy="${c}" rx="1.400" ry="${4 - Math.abs(i - 4.5) * .6}" fill="#f7cfe0" stroke="#7b3156" stroke-width=".7"/>`).join('')).join('')
};
const ink = { 'green-c': '#2f6f4b', 'pink-c': '#93506f', 'rose-c': '#8e335e' };
function audioClip(c) {
  const { x, w, cls, label, vol, art } = c, k = ink[cls];
  let s = `<path d="M0 22.500h${w}M0 90.500h${w}" stroke="${k}"/><path d="M0 44.500h${w}M0 112.500h${w}" stroke="${k}" opacity=".5"/><path d="M0 67.500h${w}" stroke="${k}" stroke-width="1.200"/>${art}`;
  s += c.extra || `<path d="M0 ${vol}.5h${w}" stroke="${cls == 'green-c' ? '#c3dfcf' : '#f4dce8'}"/>`;
  const tag = label ? `<span class="${label == '...' ? 'dots' : ''}">${label}</span>` : '';
  return `<div class="clip ${cls}" style="left:${x - 231}px;width:${w}px"><svg width="${w}" height="135">${s}</svg>${tag}</div>`;
}
const videoClip = (cls, x, w, t) => `<div class="clip ${cls}" style="left:${x - 231}px;width:${w}px"><span>${t}</span></div>`;
const thin = (x, w, c) => `<i class="thin" style="left:${x - 231}px;width:${w}px;background:${c}"></i>`;

const v2 = [[232, 133], [448, 392], [842, 395], [1239, 215]].map(([x, w]) => videoClip('blue-c', x, w, 'Fusion Composition')).join('');
const v1 = videoClip('gold-c', 232, 133, 'background1.mov') + videoClip('gold-c', 450, 1005, 'background2.mov');
const VO = 'Voice Over.mp3';
const a1 = [
  [232, 133, VO, [[233, 332], [334, 350], [352, 357]]],
  [376, 70, 'Voic....mp3', [[377, 409], [414, 443]]],
  [448, 125, VO, [[450, 482], [483, 512], [513, 534], [547, 570]]],
  [575, 57, 'Voi...mp3', [[580, 626]]],
  [634, 60, 'Voi...mp3', [[634, 651], [654, 670], [672, 694]]],
  [696, 144, VO, [[697, 717], [718, 764], [767, 795], [804, 823]]],
  [842, 141, VO, [[842, 876], [876, 892], [894, 926], [934, 979]]],
  [985, 252, VO, [[986, 1025], [1035, 1056], [1057, 1069], [1074, 1091], [1095, 1112], [1116, 1133], [1134, 1153], [1156, 1176], [1182, 1204], [1204, 1229]]],
  [1239, 216, VO, [[1241, 1283], [1286, 1329], [1342, 1356], [1360, 1385], [1390, 1407], [1408, 1433], [1435, 1449]]]
].map(([x, w, label, segs], i) => audioClip({
  x, w, label, cls: 'green-c', vol: 33, art: voice(x, segs),
  extra: i == 8 ? '<path d="M0 33.500h213l3 13" fill="none" stroke="#c3dfcf"/><circle cx="213" cy="33.500" r="2" fill="#fff" stroke="#111"/>' : ''
})).join('');

const P = '#d795b1';
const a2 = [[232, 2], [241, 2], [251, 3], [521, 2], [582, 2], [705, 2], [764, 2], [793, 2], [1005, 2], [1028, 2], [1047, 2], [1102, 2], [1134, 2], [1307, 3], [1333, 2], [1351, 2]].map(([x, w]) => thin(x, w, P)).join('')
  + [
    { x: 286, w: 60, label: 'sha...mp3', vol: 23, art: SHAPES.swell },
    { x: 427, w: 8, vol: 29, art: SHAPES.spike },
    { x: 677, w: 13, vol: 33, art: SHAPES.spike },
    { x: 866, w: 28, label: '...', art: SHAPES.ripple, extra: '<path d="M0 29.500h14l10 9h4" fill="none" stroke="#fff"/><circle cx="14" cy="29.500" r="2" fill="#fff" stroke="#222"/><circle cx="23" cy="38.500" r="2" fill="#fff" stroke="#222"/>' },
    { x: 901, w: 11, vol: 25, art: SHAPES.tail },
    { x: 941, w: 29, label: '...', vol: 33, art: SHAPES.double }
  ].map(c => audioClip({ ...c, cls: 'pink-c' })).join('');
const a3 = [262, 508, 563, 611, 640, 744, 816, 964, 1115, 1213].map(x => audioClip({ x, w: 21, cls: 'rose-c', label: '...', vol: 30, art: SHAPES.hit })).join('');
const a4 = [[465, 1], [474, 1], [486, 2], [830, 2], [839, 1], [846, 2], [852, 1], [1231, 1], [1241, 2], [1249, 2], [1259, 1], [1266, 1]].map(([x, w]) => thin(x, w, w == 2 ? '#8f6f9b' : '#807787')).join('');

const grid = Array.from({ length: 8 }, (_, i) => `<i class="grid" style="left:${at(i * 5)}px"></i>`).join('');
const key = k => `<button class="key">${k}</button>`;
const curve = '<svg width="20" height="13"><use href="#i-curve"/></svg>';
$('#tracks').innerHTML = [
  ['V2', 'Video 2', '#6f9fd0', '', v2], ['V1', 'Video 1', '#e0a91d', '', v1],
  ['A1', 'Audio 1', '#449165', '9 Clips', a1], ['A2', 'Audio 2', '#e58ab2', '22 Clips', a2],
  ['A3', 'Audio 3', '#cf568d', '10 Clips', a3], ['A4', 'Audio 4', '#8f6f9b', '12 Clips', a4],
  ['B1', 'Bus 1', '#186183', '', '']
].map(([id, name, color, clips, content]) => {
  const body = clips ? `<div class="tbody"><div class="tctl"><div class="trow"><input aria-label="${name} volume" value="0.0"><svg width="14" height="14"><use href="#i-lock"/></svg>${key('R') + key('S') + key('M')}</div>
    <div class="trow second"><label class="pick"><select aria-label="${name} automation"><option>None</option></select><svg width="10" height="6"><use href="#i-chev"/></svg></label>${curve}</div><p>${clips}</p></div><div class="tmeter"></div></div>` : '';
  return `<div class="track ${clips ? 'audio' : id == 'B1' ? 'bus' : ''}"><i style="background:${color}"></i><i class="gutter"></i><div class="thead"><div class="tname"><b>${id}</b><span>${name}</span><i>${id[0] == 'V' ? '' : '2.0'}</i></div>${body}</div><div class="lane">${grid}${content}</div></div>`;
}).join('');

// Mixer
const rows = [['', 27], ['Input', 27], ['Track FX', 27], ['Order', 27], ['Effects', 28], ['Effects In', 27], ['Dynamics', 68], ['EQ', 40], ['Bus Sends', 27], ['Pan', 63]];
let mix = `<div class="labels">${rows.map(([t, h]) => `<div style="height:${h}px">${t}</div>`).join('')}</div>`;
const box = (h, art) => `<svg width="57" height="${h}"><rect x=".5" y=".5" width="56" height="${h - 1}" rx="3" fill="#242428" stroke="#0c0c10"/><path d="M28.500 1v${h - 2}M1 ${h >> 1}.5h55" stroke="#3f3f45"/>${art}</svg>`;
const faderArt = () => {
  let s = '<text x="9" y="12" style="font-size:11px;fill:#d8d8da">0.0</text><path d="M54.500 4v8" stroke="#16161a" stroke-dasharray="2 1"/><rect x="44.500" y="18.500" width="19" height="2" fill="none" stroke="#08080c"/><rect x="44.500" y="25.500" width="19" height="170" fill="#242329" stroke="#08080c"/><path d="M53.500 26v170" stroke="#08080c"/>';
  [[0, 25], [5, 47], [10, 68], [15, 89], [20, 110], [30, 144], [40, 170], [50, 183]].forEach(([v, y]) => s += `<text x="36" y="${y + 4}" text-anchor="end">${v}</text><path d="M40 ${y}.5h2" stroke="#77777c"/>`);
  [25, 69, 113, 136, 147, 158, 169, 175, 181, 184, 187].forEach(y => s += `<path d="M4 ${y}.5h4" stroke="${y == 69 ? '#fff' : '#5b5b60'}"/>`);
  return s;
};
[['A1', 'Audio 1', '#449165'], ['A2', 'Audio 2', '#e58ab2'], ['A3', 'Audio 3', '#b9507f'], ['A4', 'Audio 4', '#8f6f9b'], ['Bus1', 'Bus 1', '#20617f']].forEach(([id, name, color]) => {
  const bus = id == 'Bus1';
  mix += `<section class="chan"><div class="cell c-title" style="border-top-color:${color}">${id}</div>
  <div class="cell"><button class="slot no">${bus ? '' : 'No Input'}</button></div>
  <div class="cell">${bus ? '' : '<button class="slot dial">Dial Lev</button>'}</div>
  <div class="cell">${bus ? '' : '<button class="slot ord"><span class="fx">FX</span><span class="dy">DY</span><span class="eq">EQ</span></button>'}</div>
  <div class="cell"><button class="slot">+</button></div>
  <div class="cell c-28">${key('In').replace('key', 'key in')}</div>
  <div class="cell c-dyn">${box(57, '<path d="M2 54 54 2" stroke="#9aa43c" stroke-width="1.400"/>')}</div>
  <div class="cell c-eq">${box(29, '<path d="M1 14.500h55" stroke="#3d9cab" stroke-width="1.400"/>')}</div>
  <div class="cell"><button class="slot faint">+</button></div>
  <div class="cell c-pan">${bus ? '' : box(57, '<circle cx="5" cy="5" r="3" fill="#a3c06c"/><circle cx="53" cy="5" r="3" fill="#a3c06c"/><path d="M26 2h5v5h-5z" fill="#479fce"/>')}</div>
  <div class="cell c-name ${id == 'A3' ? 'sel' : ''}">${name}</div>
  <div class="cell c-28">${(bus ? ['M'] : ['R', 'S', 'M']).map(key).join('')}</div>
  <div class="cell c-28 auto">${curve}</div>
  <div class="fader"><svg width="66" height="211">${faderArt()}</svg><input type="range" aria-label="${name} fader" value="77"></div></section>`;
});
$('#mixer').innerHTML = mix;
```
